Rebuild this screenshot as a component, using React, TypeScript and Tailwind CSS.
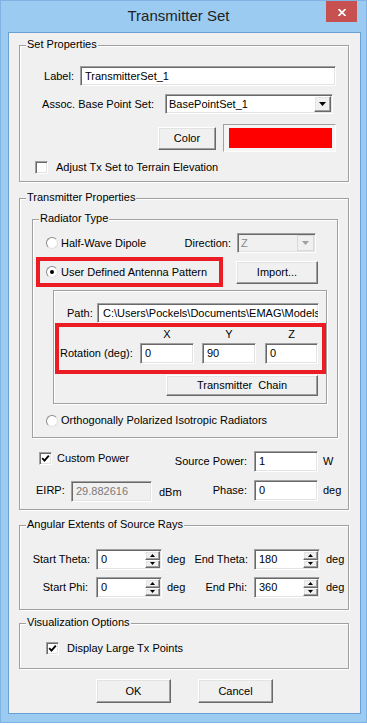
import type { ReactNode } from "react";

// classic win32 3d edges
const sunken =
  "border border-t-[#a0a0a0] border-l-[#a0a0a0] border-b-white border-r-white shadow-[inset_1px_1px_0_#696969,inset_-1px_-1px_0_#e3e3e3]";
const raised =
  "bg-[#f0f0f0] border border-t-white border-l-white border-b-[#696969] border-r-[#696969] shadow-[inset_-1px_-1px_0_#a0a0a0,inset_1px_1px_0_#e3e3e3]";

function GroupBox({
  title,
  className = "",
  children,
}: {
  title?: string;
  className?: string;
  children?: ReactNode;
}) {
  return (
    <div
      className={`relative shrink-0 flex flex-col border border-[#a0a0a0] shadow-[1px_1px_0_#fff,inset_1px_1px_0_#fff] ${className}`}
    >
      {title && (
        <span className="absolute -top-[8px] left-[6px] px-[1px] bg-[#f0f0f0] leading-[13px]">
          {title}
        </span>
      )}
      {children}
    </div>
  );
}

function Radio({ checked = false }: { checked?: boolean }) {
  return (
    <span className="w-[12px] h-[12px] shrink-0 rounded-full bg-white border border-[#8a8a8a] border-b-[#e0e0e0] border-r-[#e0e0e0] flex items-center justify-center">
      {checked && <span className="w-[4px] h-[4px] rounded-full bg-black" />}
    </span>
  );
}

function Check({ checked = false }: { checked?: boolean }) {
  return (
    <span className={`w-[13px] h-[13px] shrink-0 bg-white ${sunken} flex items-center justify-center`}>
      {checked && (
        <svg width="9" height="9" viewBox="0 0 9 9">
          <path d="M1.2 4.2 L3.5 6.6 L7.8 1.6" fill="none" stroke="#000" strokeWidth="1.8" />
        </svg>
      )}
    </span>
  );
}

function Field({
  value,
  className = "",
  disabled = false,
}: {
  value: string;
  className?: string;
  disabled?: boolean;
}) {
  return (
    <div
      className={`${sunken} ${disabled ? "bg-[#f0f0f0] text-[#7a7a7a]" : "bg-white"} shrink-0 pl-[4px] flex items-center overflow-hidden whitespace-nowrap ${className}`}
    >
      {value}
    </div>
  );
}

function Button({ label, className = "" }: { label: string; className?: string }) {
  return (
    <div className={`${raised} shrink-0 flex items-center justify-center whitespace-pre ${className}`}>
      {label}
    </div>
  );
}

function Arrow({ color = "#000" }: { color?: string }) {
  return (
    <svg width="7" height="4" viewBox="0 0 7 4">
      <polygon points="0,0 7,0 3.5,4" fill={color} />
    </svg>
  );
}

function Combo({
  value,
  className = "",
  disabled = false,
}: {
  value: string;
  className?: string;
  disabled?: boolean;
}) {
  return (
    <div
      className={`${sunken} ${disabled ? "bg-[#f0f0f0] text-[#8a8a8a]" : "bg-white"} shrink-0 h-[20px] flex ${className}`}
    >
      <span className="flex-1 pl-[3px] flex items-center">{value}</span>
      <div className={`${disabled ? "bg-[#f0f0f0] border border-[#d9d9d9]" : raised} w-[17px] my-[1px] mr-[1px] flex items-center justify-center`}>
        <Arrow color={disabled ? "#a0a0a0" : "#000"} />
      </div>
    </div>
  );
}

function Spin({ value }: { value: string }) {
  return (
    <div className={`${sunken} bg-white shrink-0 w-[66px] h-[21px] flex`}>
      <span className="flex-1 pl-[4px] flex items-center">{value}</span>
      <div className="w-[15px] my-[1px] mr-[1px] flex flex-col">
        <div className={`${raised} flex-1 flex items-center justify-center`}>
          <svg width="5" height="3" viewBox="0 0 5 3">
            <polygon points="2.5,0 5,3 0,3" fill="#000" />
          </svg>
        </div>
        <div className={`${raised} flex-1 flex items-center justify-center`}>
          <svg width="5" height="3" viewBox="0 0 5 3">
            <polygon points="0,0 5,0 2.5,3" fill="#000" />
          </svg>
        </div>
      </div>
    </div>
  );
}

export default function App() {
  return (
    <div className="w-[367px] h-[725px] bg-white font-['Liberation_Sans',Arial,sans-serif] text-[11px] text-black">
      <div className="w-[367px] h-[723px] bg-[#9ccbf2] border border-[#80b3e4] flex flex-col">
        {/* title bar */}
        <div className="relative h-[31px] shrink-0 flex items-center justify-center pr-[10px]">
          <span className="text-[15px] text-[#222]">Transmitter Set</span>
          <div className="absolute top-0 right-[9px] w-[31px] h-[21px] bg-[#c75050] flex items-center justify-center pt-[2px]">
            <svg width="8" height="7" viewBox="0 0 8 7">
              <path d="M0.5 0 L7.5 7 M7.5 0 L0.5 7" stroke="#fff" strokeWidth="1.7" />
            </svg>
          </div>
        </div>

        <div className="ml-[7px] w-[353px] h-[682px] shrink-0 border border-[#6a9fd6] bg-[#f0f0f0] flex flex-col items-start">
          {/* Set Properties */}
          <GroupBox title="Set Properties" className="mt-[12px] ml-[10px] w-[330px] h-[137px]">
            <div className="flex items-center h-[20px] mt-[20px]">
              <span className="w-[54px] text-right">Label:</span>
              <Field value="TransmitterSet_1" className="ml-[6px] w-[256px] h-[20px]" />
            </div>
            <div className="flex items-center h-[20px] mt-[8px]">
              <span className="w-[134px] text-right">Assoc. Base Point Set:</span>
              <Combo value="BasePointSet_1" className="ml-[11px] w-[168px]" />
            </div>
            <div className="flex items-center h-[28px] mt-[10px] pl-[138px]">
              <Button label="Color" className="w-[58px] h-[23px]" />
              <div className="ml-[7px] w-[113px] h-[28px] border border-[#a0a0a0] border-b-white border-r-white bg-[#f4f4f4] pl-[5px] pr-[3px] py-[3px]">
                <div className="w-full h-full bg-[#ff0000]" />
              </div>
            </div>
            <div className="flex items-center h-[13px] mt-[9px]">
              <span className="ml-[15px]">
                <Check />
              </span>
              <span className="ml-[8px]">Adjust Tx Set to Terrain Elevation</span>
            </div>
          </GroupBox>

          {/* Transmitter Properties */}
          <GroupBox title="Transmitter Properties" className="mt-[16px] ml-[10px] w-[330px] h-[312px]">
            <GroupBox title="Radiator Type" className="mt-[20px] ml-[12px] w-[306px] h-[219px]">
              <div className="flex items-center h-[20px] mt-[13px]">
                <span className="ml-[13px]">
                  <Radio />
                </span>
                <span className="ml-[3px]">Half-Wave Dipole</span>
                <span className="flex-1" />
                <span>Direction:</span>
                <Combo value="Z" disabled className="ml-[6px] w-[79px] mr-[21px]" />
              </div>
              <div className="flex items-center h-[30px] mt-[4px]">
                <div className="ml-[3px] w-[187px] h-[30px] border-4 border-[#ec1c24] flex items-center pl-[6px]">
                  <Radio checked />
                  <span className="ml-[3px]">User Defined Antenna Pattern</span>
                </div>
                <Button label="Import..." className="ml-[13px] w-[82px] h-[23px]" />
              </div>
              <GroupBox className="mt-[3px] ml-[20px] w-[274px] h-[114px]">
                <div className="flex items-center h-[20px] mt-[12px]">
                  <span className="ml-[13px] w-[30px]">Path:</span>
                  <Field
                    value={"C:\\Users\\Pockels\\Documents\\EMAG\\Models\\"}
                    className="w-[222px] h-[20px] pl-[5px]"
                  />
                </div>
                <div className="ml-[1px] w-[271px] h-[51px] border-4 border-[#ec1c24] flex flex-col">
                  <div className="flex h-[12px] mt-[1px] pl-[81px] leading-[12px]">
                    <span className="w-[54px] text-center">X</span>
                    <span className="ml-[8px] w-[54px] text-center">Y</span>
                    <span className="ml-[9px] w-[53px] text-center">Z</span>
                  </div>
                  <div className="flex items-center h-[21px] mt-[3px]">
                    <span className="w-[81px] pl-[1px] whitespace-nowrap">Rotation (deg):</span>
                    <Field value="0" className="w-[54px] h-[21px]" />
                    <Field value="90" className="ml-[8px] w-[54px] h-[21px]" />
                    <Field value="0" className="ml-[9px] w-[53px] h-[21px]" />
                  </div>
                </div>
                <Button label="Transmitter  Chain" className="mt-[1px] ml-[112px] w-[152px] h-[21px]" />
              </GroupBox>
              <div className="flex items-center h-[13px] mt-[10px]">
                <span className="ml-[13px]">
                  <Radio />
                </span>
                <span className="ml-[3px]">Orthogonally Polarized Isotropic Radiators</span>
              </div>
            </GroupBox>

            <div className="flex h-[21px] mt-[13px]">
              <div className="w-[150px] shrink-0 h-[13px] mt-[1px] flex items-center">
                <span className="ml-[19px] shrink-0">
                  <Check checked />
                </span>
                <span className="ml-[5px] shrink-0">Custom Power</span>
              </div>
              <div className="flex items-center">
                <span className="w-[77px] shrink-0 text-right">Source Power:</span>
                <Field value="1" className="ml-[7px] w-[64px] h-[21px]" />
                <span className="ml-[5px]">W</span>
              </div>
            </div>
            <div className="flex items-center h-[21px] mt-[8px]">
              <div className="w-[150px] shrink-0 flex items-center">
                <span className="ml-[16px] w-[35px] shrink-0">EIRP:</span>
                <Field value="29.882616" disabled className="w-[81px] h-[21px] mt-[1px]" />
                <span className="ml-[7px] mt-[3px] shrink-0">dBm</span>
              </div>
              <span className="w-[77px] shrink-0 text-right">Phase:</span>
              <Field value="0" className="ml-[7px] w-[64px] h-[21px]" />
              <span className="ml-[5px]">deg</span>
            </div>
          </GroupBox>

          {/* Angular Extents */}
          <GroupBox title="Angular Extents of Source Rays" className="mt-[15px] ml-[10px] w-[330px] h-[85px]">
            <div className="flex items-center h-[21px] mt-[23px]">
              <span className="w-[70px] shrink-0 text-right">Start Theta:</span>
              <span className="ml-[6px]">
                <Spin value="0" />
              </span>
              <span className="ml-[5px] w-[22px] shrink-0">deg</span>
              <span className="w-[59px] shrink-0 text-right">End Theta:</span>
              <span className="ml-[6px]">
                <Spin value="180" />
              </span>
              <span className="ml-[6px]">deg</span>
            </div>
            <div className="flex items-center h-[21px] mt-[7px]">
              <span className="w-[70px] shrink-0 text-right pr-[2px]">Start Phi:</span>
              <span className="ml-[6px]">
                <Spin value="0" />
              </span>
              <span className="ml-[5px] w-[22px] shrink-0">deg</span>
              <span className="w-[59px] shrink-0 text-right pr-[1px]">End Phi:</span>
              <span className="ml-[6px]">
                <Spin value="360" />
              </span>
              <span className="ml-[6px]">deg</span>
            </div>
          </GroupBox>

          {/* Visualization */}
          <GroupBox title="Visualization Options" className="mt-[13px] ml-[10px] w-[330px] h-[46px]">
            <div className="flex items-center h-[13px] mt-[18px]">
              <span className="ml-[26px]">
                <Check checked />
              </span>
              <span className="ml-[8px]">Display Large Tx Points</span>
            </div>
          </GroupBox>

          <div className="mt-[10px] w-full flex justify-center gap-[27px]">
            <Button label="OK" className="w-[75px] h-[24px]" />
            <Button label="Cancel" className="w-[75px] h-[24px]" />
          </div>
        </div>
      </div>
    </div>
  );
}
